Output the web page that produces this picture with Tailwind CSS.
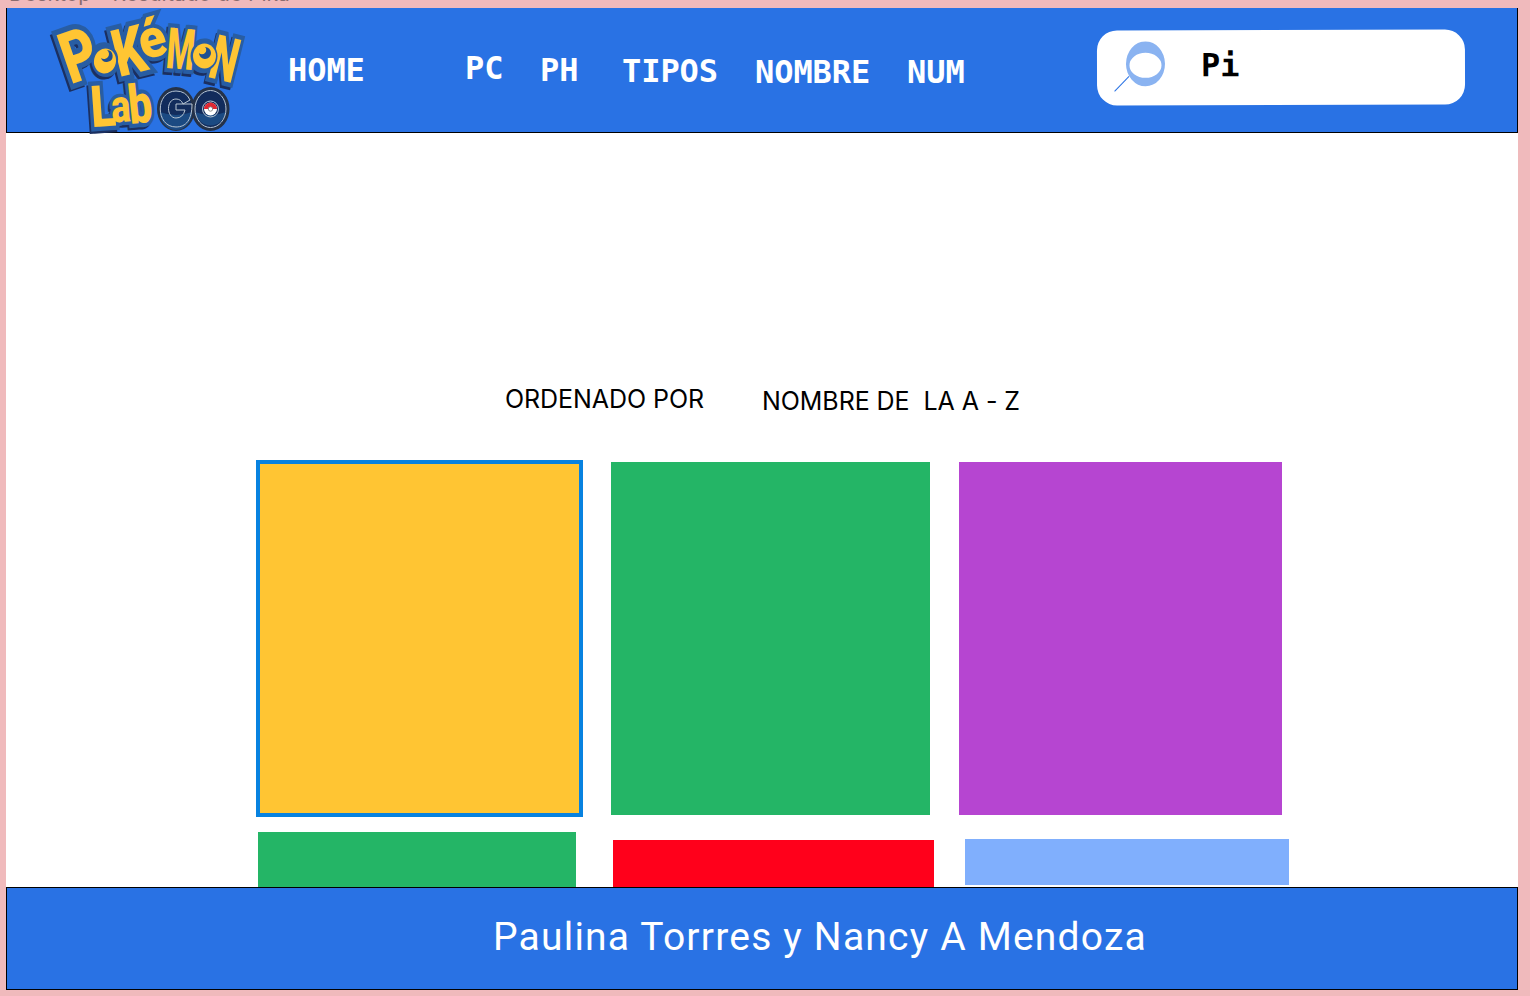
<!DOCTYPE html>
<html lang="es">
<head>
<meta charset="utf-8">
<title>Pokémon Lab GO</title>
<script src="https://cdn.jsdelivr.net/npm/@tailwindcss/browser@4"></script>
</head>
<body class="bg-[#f0babc] w-[1530px] h-[996px] overflow-hidden pl-1.5">
<div class="h-2 overflow-hidden text-[21px] leading-[20px] text-[#8a6c6e] font-['Inter',sans-serif]"><div class="-mt-[16.500px] ml-[3px] whitespace-pre">Desktop - Resultado de Pika</div></div>
<div class="w-[1512px] h-[982px] bg-white flex flex-col">
  <header class="h-[125px] shrink-0 bg-[#2972e4] border border-t-0 border-black flex items-start text-white">
    <svg class="ml-[38px] w-[205px] h-[132px] shrink-0 overflow-visible" viewBox="45 8 205 132" font-family="Roboto, sans-serif" font-weight="900" font-size="100" text-anchor="middle" stroke-linejoin="miter" stroke-miterlimit="3">
      <defs>
        <g id="word">
          <text transform="translate(79 55) rotate(-19) scale(.54 .72)" y="35">P</text>
          <text transform="translate(153 43) rotate(-16) scale(.5 .54)" y="26">é</text>
          <text transform="translate(129 51) rotate(-14) scale(.5 .66)" y="35">K</text>
          <text transform="translate(181 49) rotate(5) scale(.32 .57)" y="35">M</text>
          <text transform="translate(225 59) rotate(14) scale(.38 .62)" y="35">N</text>
          <text transform="translate(103 106) rotate(-4) scale(.46 .58)" y="35">L</text>
          <text transform="translate(121 110) rotate(-4) scale(.36 .46)" y="26">a</text>
          <text transform="translate(140 104) rotate(-6) scale(.42 .54)" y="35">b</text>
        </g>
        <g id="os">
          <text transform="translate(105 60) rotate(-10) scale(.42 .5)" y="26">o</text>
          <text transform="translate(204 56) rotate(8) scale(.42 .5)" y="26">o</text>
        </g>
      </defs>
      <g fill="#1b2f60" stroke="#1b2f60" stroke-width="13"><use href="#word" x="-2" y="3"/><use href="#os" x="-2" y="3"/></g>
      <g fill="#285da3" stroke="#285da3" stroke-width="15"><use href="#word"/><use href="#os"/></g>
      <use href="#word" fill="#ffc533"/>
      <g fill="#285da3"><ellipse cx="105" cy="60" rx="13" ry="15" transform="rotate(12 105 60)"/><ellipse cx="204" cy="56" rx="13.500" ry="15"/></g>
      <g fill="#ffc533"><ellipse cx="105" cy="61" rx="11" ry="12.500" transform="rotate(12 105 61)"/><ellipse cx="204.500" cy="56" rx="11.500" ry="12.500"/></g>
      <g fill="#1f4f91"><path d="M107 50a6 6 0 1 1-6 8a4 4 0 0 0 6-8zM205 47a6 6 0 1 1-6 6a4 4 0 0 0 6-6z"/></g>
      <g fill="#122c5c" stroke="#253248" stroke-width="3"><ellipse cx="176" cy="109" rx="17.500" ry="20.500"/><ellipse cx="210.500" cy="109" rx="17.500" ry="20.500"/></g>
      <path d="M160 112q16 6 32 0a16 18 0 0 1-32 0M195 112q16 6 31 0a16 18 0 0 1-31 0" fill="#1b4a82"/>
      <g fill="none" stroke="#b8c5d2" stroke-width="1"><path d="M190 100Q186 91 176 91C155 91 155 127 176 127C186 127 192 120 192 104H176V110H185Q183 118 176 118C166 118 166 99 176 99Q181 99 183 104Z"/><ellipse cx="210.500" cy="109" rx="15.500" ry="18.500"/><circle cx="210.500" cy="109" r="8"/></g>
      <circle cx="210.500" cy="109" r="6.500" fill="#fff"/><path d="M204 109a6.500 6.500 0 0 1 13 0z" fill="#e02832"/><circle cx="210.500" cy="109" r="2.200" fill="#fff" stroke="#777" stroke-width=".8"/>
    </svg>
    <nav class="flex items-start whitespace-pre text-[32px] leading-[40px] font-bold font-['DejaVu_Sans_Mono',monospace] tracking-[-0.06px]">
      <a class="w-[77px] ml-[38px] mt-[42px]">HOME</a>
      <a class="w-[38px] ml-[100px] mt-[40px]">PC</a>
      <a class="w-[38px] ml-[37px] mt-[42px]">PH</a>
      <a class="w-[96px] ml-[44px] mt-[43px]">TIPOS</a>
      <a class="w-[115px] ml-[37px] mt-[44px]">NOMBRE</a>
      <a class="w-[58px] ml-[37px] mt-[44px]">NUM</a>
    </nav>
    <div class="ml-auto mr-[52px] mt-[22.350px] w-[368px] h-[75px] shrink-0 rounded-[20px] bg-white text-black flex rotate-[-0.15deg]">
      <svg class="ml-[17px] mt-[11px] w-[52px] h-[52px]" viewBox="0 0 52 52"><path fill="#8ab3f1" fill-rule="evenodd" d="M12 22.500a19.500 22.500 0 1 1 39 0a19.500 22.500 0 1 1-39 0M15.500 24a16 12.500 0 1 0 32 0a16 12.500 0 1 0-32 0"/><path d="M.5 50L15 35" stroke="#2972e4"/></svg>
      <span class="ml-[35px] mt-[15px] text-[32px] leading-[40px] font-bold font-['DejaVu_Sans_Mono',monospace]">Pi</span>
    </div>
  </header>
  <main class="h-[754px] shrink-0 overflow-hidden font-['Inter',sans-serif] text-black">
    <div class="flex pt-[251px] pl-[499px] text-[25px] leading-[30px] whitespace-pre tracking-[-0.06px]"><span class="w-[257px]">ORDENADO POR</span><span class="mt-0.5">NOMBRE DE  LA A - Z</span></div>
    <section class="mt-[44px] ml-[250px] flex items-start">
      <div class="w-[327px] h-[357px] bg-[#ffc533] border-4 border-[#0782e0]"></div>
      <div class="ml-[28px] mt-0.5 w-[319px] h-[353px] bg-[#24b566]"></div>
      <div class="ml-[29px] mt-0.5 w-[323px] h-[353px] bg-[#b645d1]"></div>
    </section>
    <section class="mt-[15px] ml-[252px] flex items-start">
      <div class="w-[318px] h-[60px] bg-[#24b566]"></div>
      <div class="ml-[37px] mt-2 w-[321px] h-[60px] bg-[#ff001b]"></div>
      <div class="ml-[31px] mt-[7px] w-[324px] h-[46px] bg-[#80affd]"></div>
    </section>
  </main>
  <footer class="h-[103px] shrink-0 bg-[#2972e4] border border-black text-white pl-[486px] pt-[25px] whitespace-nowrap font-['Roboto',sans-serif] font-normal text-[39px] leading-[48px] tracking-[1.2px]"><span>Paulina Torrres y Nancy A Mendoza</span></footer>
</div>
</body>
</html>
